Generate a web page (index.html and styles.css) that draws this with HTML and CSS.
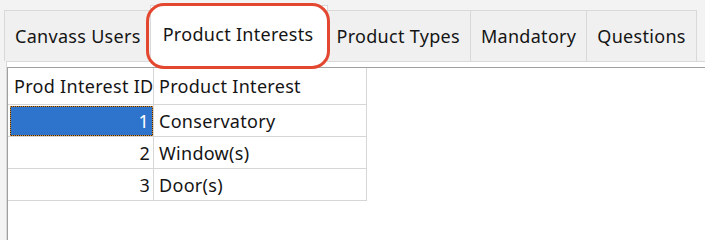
FILE: index.html
```html
<!DOCTYPE html>
<html>
<head>
<meta charset="utf-8">
<link rel="stylesheet" href="styles.css">
</head>
<body>
<div class="window">
  <div class="tabs">
    <div class="tab">Canvass Users</div>
    <div class="tab active">Product Interests</div>
    <div class="tab">Product Types</div>
    <div class="tab">Mandatory</div>
    <div class="tab">Questions</div>
  </div>
  <div class="page">
    <div class="grid">
      <div class="cell head">Prod Interest ID</div>
      <div class="cell head">Product Interest</div>
      <div class="cell num"><span class="sel">1</span></div>
      <div class="cell">Conservatory</div>
      <div class="cell num">2</div>
      <div class="cell">Window(s)</div>
      <div class="cell num">3</div>
      <div class="cell">Door(s)</div>
    </div>
  </div>
</div>
</body>
</html>
```
FILE: styles.css
```css
html, body {
  margin: 0;
  padding: 0;
}
html {
  background: #fff;
}
body {
  width: 705px;
  min-height: 100vh;
  overflow: hidden;
  background: #f3f3f3;
  font-family: "Noto Sans", "Open Sans", sans-serif;
  font-size: 18px;
  letter-spacing: 0.3px;
  color: #151515;
  display: flex;
  flex-direction: column;
}
.window {
  flex: 1;
  display: flex;
  flex-direction: column;
  padding-top: 10px;
}
.tabs {
  display: flex;
  align-items: flex-end;
  height: 51px;
  padding-left: 4px;
  position: relative;
  z-index: 2;
}
.tab {
  height: 51px;
  box-sizing: border-box;
  padding: 0 10px 1px;
  border: 1px solid #d9d9d9;
  border-bottom: none;
  background: #f0f0f0;
  display: flex;
  align-items: center;
  white-space: nowrap;
  margin-left: -1px;
}
.tab:first-child {
  margin-left: 0;
}
.tab.active {
  position: relative;
  height: 57px;
  margin: 0 -2px -1px -2px;
  padding: 0 14px 0 12px;
  background: #fff;
  z-index: 3;
}
.tab.active::after {
  content: "";
  position: absolute;
  left: -5px;
  right: -3px;
  top: -3px;
  bottom: -7px;
  border: 3px solid #e4472f;
  border-radius: 18px;
}
.page {
  flex: 1;
  margin-left: 6px;
  border-top: 1px solid #d9d9d9;
  border-left: 1px solid #d9d9d9;
  background: #fff;
  padding-top: 5px;
  display: flex;
  flex-direction: column;
}
.grid {
  flex: 1;
  border-top: 1px solid #a0a0a0;
  border-left: 1px solid #a0a0a0;
  display: grid;
  grid-template-columns: 146px 213px;
  grid-auto-rows: 32px;
  grid-template-rows: 37px;
  align-content: start;
}
.cell {
  border-right: 1px solid #d6d6d6;
  border-bottom: 1px solid #d6d6d6;
  display: flex;
  align-items: center;
  padding-left: 5px;
  white-space: nowrap;
}
.cell.head:first-child {
  padding-left: 6px;
}
.cell.num {
  justify-content: flex-end;
  padding: 0 3px 0 2px;
}
.sel {
  align-self: stretch;
  flex: 1;
  margin: 1px -3px 0 0;
  padding-right: 4px;
  background: #2f74cc;
  color: #fff;
  display: flex;
  align-items: center;
  justify-content: flex-end;
  box-shadow: inset 0 0 0 1px #3a2f25;
  outline: 1px dotted #d08a32;
  outline-offset: -1px;
}
```
